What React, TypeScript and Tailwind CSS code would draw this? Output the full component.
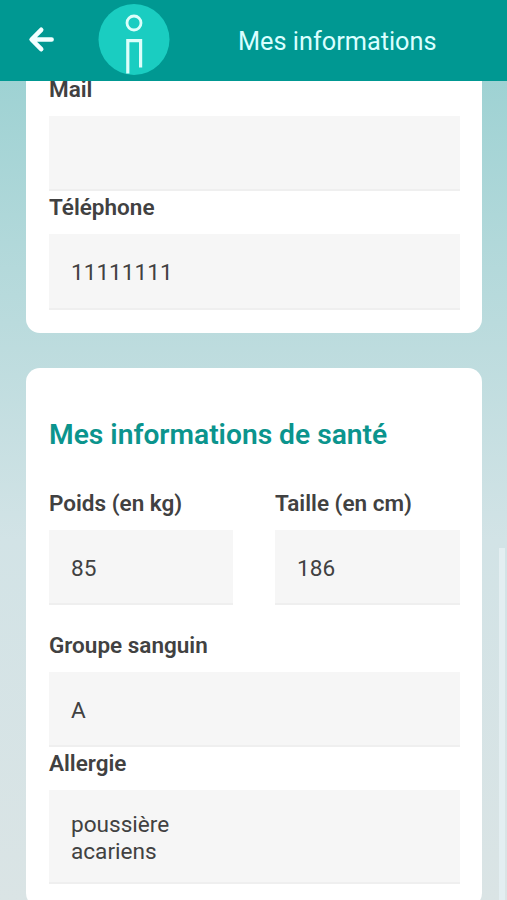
import type { ReactNode } from "react";

function Field({ label, children, className = "" }: { label: string; children?: ReactNode; className?: string }) {
  return (
    <div className={className}>
      <div className="h-[33px] mb-[10px] text-[22.5px] leading-[33px] font-semibold whitespace-nowrap">{label}</div>
      <div className="min-h-[75.5px] flex items-center bg-[#f6f6f6] border-b-2 border-[#efefef] px-[22px] pt-[21px] pb-[17px] text-[22.6px] leading-[27px] whitespace-pre-line">
        {children}
      </div>
    </div>
  );
}

// round logo of the app: a little person in the shape of an "i"
function Logo() {
  return (
    <svg className="ml-11 -mt-px shrink-0" width="72" height="74" viewBox="0 0 72 74" fill="none">
      <circle cx="36" cy="36.5" r="35.5" fill="#1acdc1" />
      <circle cx="36" cy="20" r="7" stroke="#dcfffb" strokeWidth="2.8" />
      <path d="M29.8 70.5V37.6H42.6V64.5" stroke="#dcfffb" strokeWidth="3.2" />
    </svg>
  );
}

export default function App() {
  return (
    <div className="h-[900px] w-full overflow-hidden flex flex-col font-['Roboto',sans-serif] text-[#414141] bg-linear-to-b from-[#95cfd0] from-0% via-[#d2e3e6] via-60% to-[#dae4e5]">
      <header className="relative z-10 h-[81px] shrink-0 bg-[#009892] flex items-center">
        <svg className="ml-7 -mt-px shrink-0" width="26" height="28" viewBox="0 0 26 28" fill="none" stroke="#f2ffff" strokeWidth="4.6" strokeLinecap="round" strokeLinejoin="round">
          <path d="M13.2 3.8L3.6 13.5L13.2 23.2M4 13.5H23.6" />
        </svg>
        <Logo />
        <h1 className="ml-[68px] mt-0.5 text-[25.3px] leading-8 text-[#daffff] whitespace-nowrap">Mes informations</h1>
      </header>

      <main className="relative grow min-h-0 overflow-hidden pl-[26px] pr-[25px]">
        <section className="-mt-[8.5px] bg-white rounded-b-[14px] pl-[23px] pr-[22px] pb-[23px]">
          <Field label="Mail" />
          <Field label="Téléphone">11111111</Field>
        </section>

        <section className="mt-[35px] bg-white rounded-[14px] pl-[23px] pr-[22px] pt-[49px] pb-[23px]">
          <h2 className="text-[28.2px] leading-9 font-semibold text-[#0b948d] whitespace-nowrap">Mes informations de santé</h2>
          <div className="mt-[34px] grid grid-cols-[184px_185px] gap-[42px]">
            <Field label="Poids (en kg)">85</Field>
            <Field label="Taille (en cm)">186</Field>
          </div>
          <Field label="Groupe sanguin" className="mt-[23.5px]">A</Field>
          <Field label="Allergie">{"poussière\nacariens"}</Field>
        </section>

        {/* scroll thumb */}
        <div className="absolute top-[467px] right-0.5 bottom-0 w-1.5 bg-[#e3eef1]" />
      </main>
    </div>
  );
}
